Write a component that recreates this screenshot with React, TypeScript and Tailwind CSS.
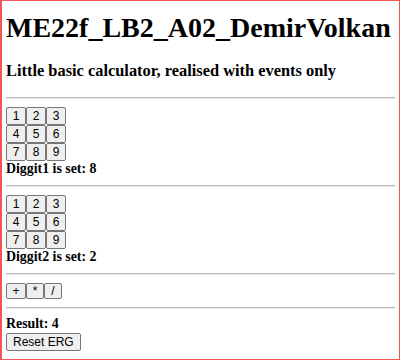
const digits = [
  ["1", "2", "3"],
  ["4", "5", "6"],
  ["7", "8", "9"],
];

const btn =
  "box-border font-['Liberation_Sans'] text-[12px] leading-[14px] text-black bg-[#efefef] border border-[#767676] rounded-[2px] py-0";

function Rule() {
  return <hr className="my-[8px] h-0 border-0 border-t border-b border-t-[#b9b9b9] border-b-[#e6e6e6]" />;
}

function DigitPad({ label, value }: { label: string; value: string }) {
  return (
    <>
      <div>
        {digits.map((row, i) => (
          <div key={i} className="flex">
            {row.map((d) => (
              <button key={d} className={btn + " w-[20px] h-[18px] px-0"}>
                {d}
              </button>
            ))}
          </div>
        ))}
      </div>
      <div className="font-bold h-[16px]">
        {label} is set: {value}
      </div>
    </>
  );
}

export default function App() {
  return (
    <div className="w-[400px] h-[360px] box-border border border-l-2 border-[#f15555] pt-[11px] pl-[4px] pr-[4px] bg-white font-['Liberation_Serif'] text-[13.87px] leading-[normal] text-black overflow-hidden">
      <h1 className="text-[28px] leading-[32px] font-bold mb-[18.4px] whitespace-nowrap">ME22f_LB2_A02_DemirVolkan</h1>
      <h3 className="text-[16.4px] leading-[18.6px] font-bold mb-[16.2px]">Little basic calculator, realised with events only</h3>
      <Rule />
      <DigitPad label="Diggit1" value="8" />
      <Rule />
      <DigitPad label="Diggit2" value="2" />
      <Rule />
      <div className="flex">
        <button className={btn + " w-[20px] h-[16px] px-0"}>+</button>
        <button className={btn + " w-[18px] h-[16px] px-0"}>*</button>
        <button className={btn + " w-[18px] h-[16px] px-0"}>/</button>
      </div>
      <Rule />
      <div className="font-bold h-[16px] -mt-[1px]">Result: 4</div>
      <button className={btn + " h-[18px] px-[6px] mt-[1px]"}>Reset ERG</button>
    </div>
  );
}
